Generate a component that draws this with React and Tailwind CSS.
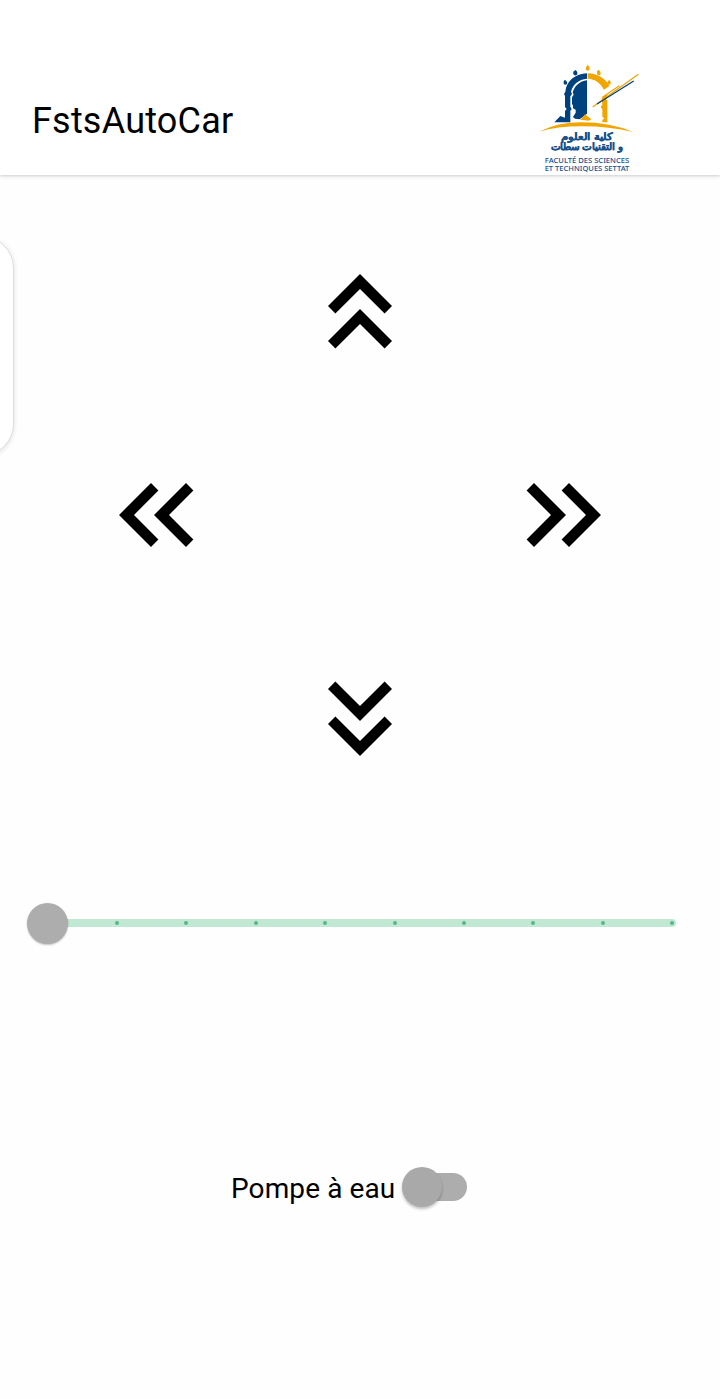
import React from "react";

const turns = {
  up: "",
  right: "rotate-90",
  down: "rotate-180",
  left: "-rotate-90",
};

function DoubleChevron({ direction, label }) {
  return (
    <button aria-label={label} className="flex size-[100px] items-center justify-center">
      <svg viewBox="0 0 100 100" className={`size-[100px] ${turns[direction]}`}>
        <path d="M50 13 82 45 74.6 52.4 50 28 25.4 52.4 18 45Z" />
        <path d="M50 48 82 80 74.6 87.4 50 63 25.4 87.4 18 80Z" />
      </svg>
    </button>
  );
}

function Logo() {
  return (
    <svg viewBox="0 0 360 345" className="h-[115px] w-[120px] shrink-0">
      <g fill="#00427f">
        <path d="M171 40V56C146 58 129 73 123 95L126 102 121 109V140L125 147 121 153V187H73L91 168 105 173V153L110 147 105 141V108L102 102 106 95C109 63 136 41 171 40Z" />
        <path d="M171 61V161L149 178 135 176 129 171 137 158V149L129 145V137L126 131V112L131 104 128 97C134 78 149 63 171 61Z" />
        <path d="M136 30Q145 35 141 44 135 49 130 43V35Z" />
        <path d="M105 59Q113 65 111 71 106 77 101 71V64Z" />
      </g>
      <g fill="#f0a500">
        <path d="M173 40C203 41 225 54 238 78L222 89C211 69 196 57 173 56Z" />
        <path d="M215 113 232 102V110L228 117 232 122V187H217V180L223 175 217 170V148L212 141 217 134Z" />
        <path d="M165 163 184 178Q178 184 166 181L151 180Z" />
        <path d="M173 14Q181 23 178 29 173 34 168 29 165 23 173 14Z" />
        <path d="M206 29Q214 36 211 44 206 48 201 42V34Z" />
        <path d="M238 59Q244 66 242 72 237 77 232 72 230 65 238 59Z" />
        <path d="M27 215Q82 187 155 187 241 187 309 216 239 199 155 199 81 199 27 215Z" />
      </g>
      <path d="M188 141 325 43M217 112 268 77" stroke="#f0a500" strokeWidth="3.5" />
      <path d="M201 132 311 63" stroke="#00427f" strokeWidth="4" />
      <g fill="#15508b" textAnchor="middle">
        <g className="font-['Liberation_Sans',sans-serif] font-bold" stroke="#15508b" strokeWidth="1" direction="rtl">
          <text x="171" y="241" fontSize="29" textLength="154" lengthAdjust="spacingAndGlyphs">كلية العلوم</text>
          <text x="171" y="271" fontSize="29" textLength="218" lengthAdjust="spacingAndGlyphs">و التقنيات سطات</text>
        </g>
        <g className="font-['Noto_Sans','Open_Sans',sans-serif] font-medium">
          <text x="171" y="308" fontSize="22" textLength="253" lengthAdjust="spacingAndGlyphs">FACULTÉ DES SCIENCES</text>
          <text x="171" y="332" fontSize="22" textLength="254" lengthAdjust="spacingAndGlyphs">ET TECHNIQUES SETTAT</text>
        </g>
      </g>
    </svg>
  );
}

function SpeedSlider() {
  return (
    <div className="mt-[97px] ml-[27px] flex h-[42px] w-[649px] items-center">
      <div className="z-10 size-[41px] shrink-0 rounded-full bg-[#adadad] shadow-[0_1px_2px_rgba(0,0,0,0.25)]" />
      <div className="-ml-2 flex h-2 grow items-center justify-between rounded-r-full bg-[#c0e8d2] pr-[2px] pl-[55px]">
        {Array.from({ length: 9 }, (_, i) => (
          <span key={i} className="size-1 rounded-full bg-[#56b886]" />
        ))}
      </div>
    </div>
  );
}

export default function App() {
  return (
    <div className="flex h-[1399px] w-[720px] flex-col overflow-hidden bg-[#fefefe] font-['Roboto',sans-serif] text-black">
      <header className="z-10 flex h-[175px] shrink-0 items-end justify-between bg-white pr-[70px] pl-8 shadow-[0_1px_2px_rgba(0,0,0,0.12),0_2px_5px_rgba(0,0,0,0.07)]">
        <h1 className="pb-[29px] text-[36px] leading-[50px] tracking-[0.2px]">FstsAutoCar</h1>
        <Logo />
      </header>
      <main className="flex grow flex-col">
        <div className="flex pt-[61px]">
          <aside className="-ml-[50px] h-[220px] w-16 shrink-0 rounded-[50px] border border-[#dedede] bg-white shadow-[0_1px_5px_rgba(0,0,0,0.12)]" />
          <div className="ml-[92px] grid grid-cols-[100px_308px_100px] grid-rows-[129px_179px_100px] justify-items-center pt-[25px]">
            <div className="col-start-2"><DoubleChevron direction="up" label="Avancer" /></div>
            <div className="col-start-1 row-start-2 pt-[75px]"><DoubleChevron direction="left" label="Gauche" /></div>
            <div className="col-start-3 row-start-2 pt-[75px]"><DoubleChevron direction="right" label="Droite" /></div>
            <div className="col-start-2 row-start-3 pt-[100px]"><DoubleChevron direction="down" label="Reculer" /></div>
          </div>
        </div>
        <div className="pt-[136px]"><SpeedSlider /></div>
        <div className="mt-[222px] ml-[231px] flex h-[42px] items-center">
          <span className="w-[171px] pt-1 text-[28px] leading-[42px] tracking-[0.1px] whitespace-nowrap">Pompe à eau</span>
          <button aria-label="Pompe à eau" className="flex items-center">
            <span className="z-10 size-[40px] rounded-full bg-[#a9a9a9] shadow-[0_2px_3px_rgba(0,0,0,0.25)]" />
            <span className="-ml-5 h-7 w-[45px] rounded-r-full bg-[#adadad]" />
          </button>
        </div>
      </main>
    </div>
  );
}
